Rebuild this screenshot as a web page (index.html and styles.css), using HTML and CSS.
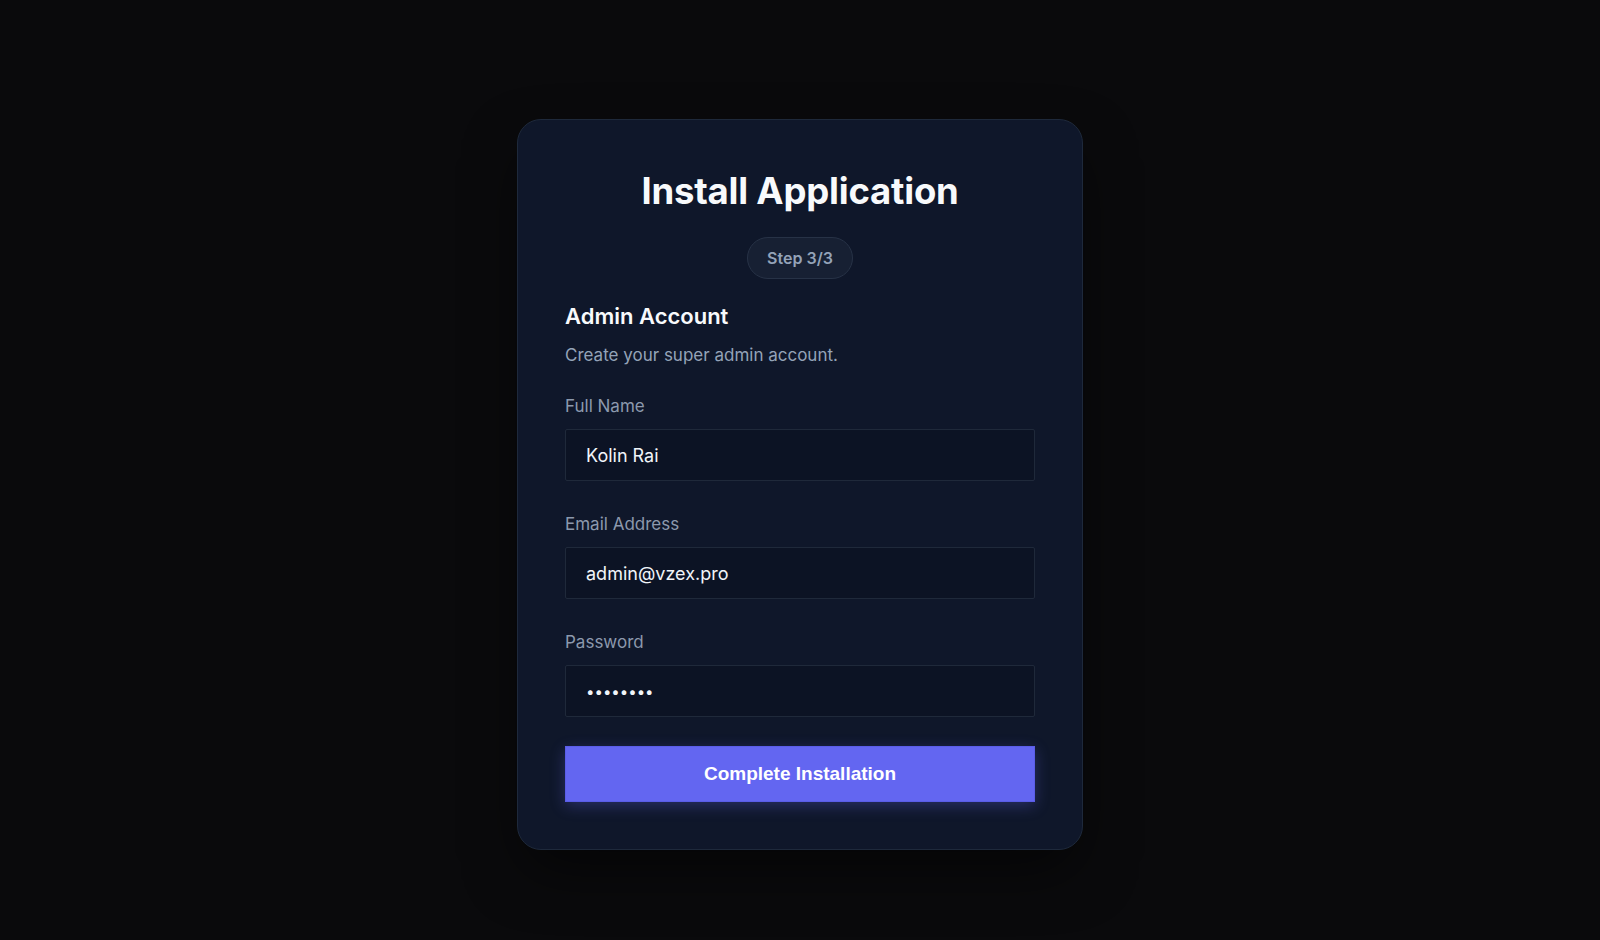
FILE: index.html
```html
<!DOCTYPE html>
<html lang="en">
<head>
<meta charset="utf-8">
<title>Install Application</title>
<link rel="stylesheet" href="styles.css">
</head>
<body>
<main class="page">
  <section class="card">
    <h1 class="title">Install Application</h1>
    <div class="step-row"><span class="step-pill">Step 3/3</span></div>
    <h2 class="section-title">Admin Account</h2>
    <p class="section-desc">Create your super admin account.</p>
    <form class="form">
      <div class="field">
        <label class="field-label" for="name">Full Name</label>
        <input class="field-input" id="name" type="text" value="Kolin Rai">
      </div>
      <div class="field">
        <label class="field-label" for="email">Email Address</label>
        <input class="field-input" id="email" type="email" value="admin@vzex.pro">
      </div>
      <div class="field">
        <label class="field-label" for="password">Password</label>
        <input class="field-input field-input--secret" id="password" type="password" value="password">
      </div>
      <button class="submit" type="button">Complete Installation</button>
    </form>
  </section>
</main>
</body>
</html>
```

FILE: styles.css
```css
* { box-sizing: border-box; }

html, body {
  margin: 0;
  padding: 0;
}

body {
  background: #0a0a0c;
  font-family: Inter, "Noto Sans", "Liberation Sans", sans-serif;
  color: #f8fafc;
}

.page {
  min-height: 940px;
  display: flex;
  justify-content: center;
  align-items: flex-start;
  padding-top: 119px;
}

.card {
  width: 566px;
  background: #0f172a;
  border: 1px solid #1e293b;
  border-radius: 24px;
  padding: 48px 47px 47px;
  box-shadow: 0 25px 60px -10px rgba(0, 0, 0, 0.6);
}

.title {
  margin: 0;
  font-size: 36.5px;
  line-height: 46px;
  font-weight: 700;
  text-align: center;
  color: #f8fafc;
  letter-spacing: -0.2px;
}

.step-row {
  display: flex;
  justify-content: center;
  margin-top: 23px;
}

.step-pill {
  display: inline-block;
  padding: 10px 19px;
  line-height: 20px;
  font-size: 16px;
  font-weight: 600;
  color: #94a3b8;
  background: #172033;
  border: 1px solid #273246;
  border-radius: 999px;
}

.section-title {
  margin: 23px 0 0;
  font-size: 22px;
  line-height: 28px;
  font-weight: 600;
  color: #f8fafc;
}

.section-desc {
  margin: 13px 0 0;
  font-size: 17px;
  line-height: 24px;
  color: #94a3b8;
}

.form {
  margin-top: 27px;
  display: flex;
  flex-direction: column;
}

.field {
  display: flex;
  flex-direction: column;
  margin-bottom: 31px;
}

.field:last-of-type {
  margin-bottom: 29px;
}

.field-label {
  font-size: 17px;
  line-height: 24px;
  color: #8c99ad;
  margin-bottom: 11px;
}

.field-input {
  height: 52px;
  width: 100%;
  padding: 0 20px;
  background: #0c1324;
  border: 1px solid #1f293a;
  border-radius: 2px;
  font-family: Inter, "Noto Sans", sans-serif;
  font-size: 18px;
  color: #f1f5f9;
  outline: none;
}

.field-input--secret {
  font-size: 15px;
}

.submit {
  height: 56px;
  width: 100%;
  background: #6366f1;
  border: 1px solid #5a5de8;
  border-radius: 0;
  color: #ffffff;
  font-family: "Liberation Sans", Arial, sans-serif;
  font-weight: 700;
  font-size: 19px;
  box-shadow: 0 4px 14px rgba(99, 102, 241, 0.3);
  cursor: pointer;
}
```
